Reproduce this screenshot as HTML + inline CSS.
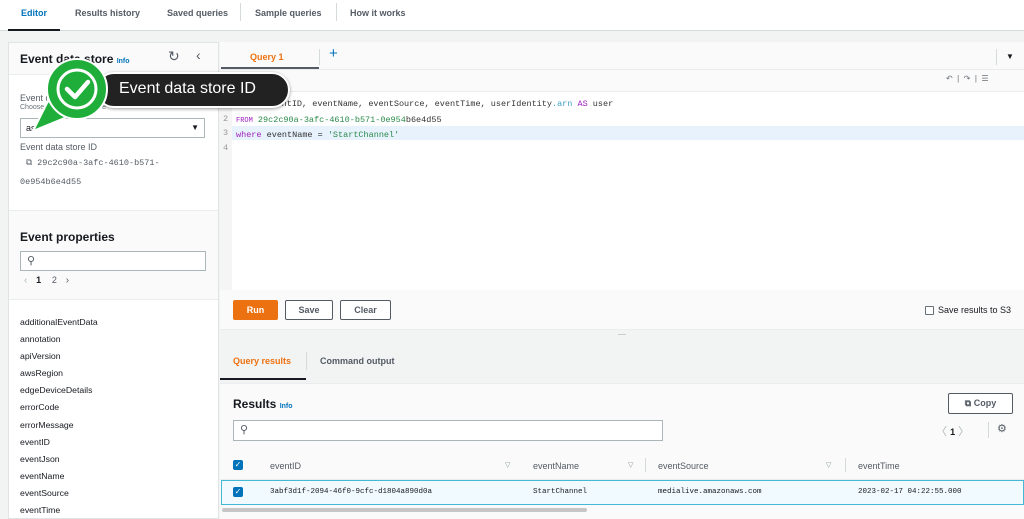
<!DOCTYPE html>
<html><head><meta charset="utf-8"><style>
*{box-sizing:border-box;margin:0;padding:0}
body{width:1024px;height:519px;overflow:hidden;background:#f2f3f3;font-family:"Liberation Sans",sans-serif;color:#16191f;position:relative;font-size:10px}
.a{position:absolute}
.mono{font-family:"Liberation Mono",monospace}
.btn{position:absolute;border:1px solid #545b64;background:#fff;font-weight:bold;font-size:9px;color:#545b64;text-align:center;line-height:18px;border-radius:2px}
</style></head><body>
<!-- top nav -->
<div class="a" style="left:0;top:0;width:1024px;height:31px;background:#fff;border-bottom:1px solid #d5dbdb"></div>
<div class="a" style="left:21px;top:8px;font-size:9px;font-weight:bold;color:#0073bb">Editor</div>
<div class="a" style="left:8px;top:29px;width:52px;height:2px;background:#16191f"></div>
<div class="a" style="left:75px;top:8px;font-size:9px;font-weight:bold;color:#545b64">Results history</div>
<div class="a" style="left:167px;top:8px;font-size:9px;font-weight:bold;color:#545b64">Saved queries</div>
<div class="a" style="left:240px;top:3px;width:1px;height:18px;background:#d5dbdb"></div>
<div class="a" style="left:255px;top:8px;font-size:9px;font-weight:bold;color:#545b64">Sample queries</div>
<div class="a" style="left:336px;top:3px;width:1px;height:18px;background:#d5dbdb"></div>
<div class="a" style="left:350px;top:8px;font-size:9px;font-weight:bold;color:#545b64">How it works</div>

<!-- left panel -->
<div class="a" style="left:8px;top:42px;width:211px;height:477px;background:#fff;border:1px solid #e1e4e4"></div>
<div class="a" style="left:9px;top:43px;width:209px;height:32px;background:#fafafa;border-bottom:1px solid #eaeded"></div>
<div class="a" style="left:20px;top:52px;font-size:12px;font-weight:bold">Event data store <span style="font-size:7px;color:#0073bb">Info</span></div>
<div class="a" style="left:168px;top:48px;font-size:14px;color:#545b64">↻</div>
<div class="a" style="left:196px;top:47px;font-size:14px;color:#545b64">‹</div>
<div class="a" style="left:20px;top:93px;font-size:9px;color:#545b64">Event data store</div>
<div class="a" style="left:20px;top:104px;font-size:7px;color:#687078">Choose an event data store</div>
<div class="a" style="left:20px;top:118px;width:185px;height:20px;border:1px solid #aab7b8;background:#fff;font-size:9px;padding:4px 5px">as<span style="float:right;font-size:8px">▼</span></div>
<div class="a" style="left:20px;top:142px;font-size:9px;color:#545b64">Event data store ID</div>
<div class="a mono" style="left:26px;top:158px;font-size:8.5px;color:#545b64">⧉ 29c2c90a-3afc-4610-b571-</div>
<div class="a mono" style="left:20px;top:177px;font-size:8.5px;color:#545b64">0e954b6e4d55</div>
<div class="a" style="left:9px;top:210px;width:209px;height:90px;background:#fafafa;border-top:1px solid #eaeded;border-bottom:1px solid #eaeded"></div>
<div class="a" style="left:20px;top:230px;font-size:12px;font-weight:bold">Event properties</div>
<div class="a" style="left:20px;top:251px;width:186px;height:20px;border:1px solid #aab7b8;background:#fff;font-size:11px;color:#545b64;padding:2px 6px">⚲</div>
<div class="a" style="left:24px;top:275px;font-size:10px;color:#aab7b8">‹ <b style="color:#16191f;margin-left:6px;font-size:9px">1</b> <span style="color:#545b64;margin-left:8px;font-size:9px">2</span> <span style="color:#545b64;margin-left:6px">›</span></div>
<div class="a" style="left:20px;top:314px;font-size:8.7px;line-height:17.1px;color:#16191f">additionalEventData<br>annotation<br>apiVersion<br>awsRegion<br>edgeDeviceDetails<br>errorCode<br>errorMessage<br>eventID<br>eventJson<br>eventName<br>eventSource<br>eventTime</div>

<!-- right top -->
<div class="a" style="left:220px;top:42px;width:804px;height:28px;background:#fafafa;border-bottom:1px solid #eaeded"></div>
<div class="a" style="left:250px;top:52px;font-size:9px;font-weight:bold;color:#ec7211">Query 1</div>
<div class="a" style="left:221px;top:67px;width:98px;height:2px;background:#545b64"></div>
<div class="a" style="left:319px;top:49px;width:1px;height:16px;background:#d5dbdb"></div>
<div class="a" style="left:329px;top:45px;font-size:15px;color:#0073bb">+</div>
<div class="a" style="left:996px;top:49px;width:1px;height:16px;background:#d5dbdb"></div>
<div class="a" style="left:1006px;top:52px;font-size:8px">▼</div>
<div class="a" style="left:220px;top:70px;width:804px;height:22px;background:#fafafa;border-bottom:1px solid #eaeded"></div>
<div class="a" style="left:946px;top:74px;font-size:8px;color:#687078">↶ &nbsp;|&nbsp; ↷ &nbsp;|&nbsp; ☰</div>
<!-- editor -->
<div class="a" style="left:220px;top:92px;width:804px;height:198px;background:#fff"></div>
<div class="a" style="left:220px;top:92px;width:12px;height:198px;background:#f5f5f5"></div>
<div class="a" style="left:232px;top:126px;width:792px;height:14px;background:#e8f2fc"></div>
<div class="a mono" style="left:223px;top:97px;font-size:8.5px;line-height:14.5px;color:#999">1<br>2<br>3<br>4</div>
<div class="a mono" style="left:236px;top:97px;font-size:8.5px;line-height:14.5px;color:#333;white-space:pre"><span style="color:#a020c0;font-size:7px">SELECT</span> eventID, eventName, eventSource, eventTime, userIdentity<span style="color:#3aa0c8">.arn</span> <span style="color:#a020c0">AS</span> user
<span style="color:#a020c0;font-size:7px">FROM</span> <span style="color:#2a8a4a">29c2c90a-3afc-4610-b571-0e954</span>b6e4d55
<span style="color:#a020c0">where</span> eventName = <span style="color:#2a8a4a">'StartChannel'</span></div>
<!-- buttons row -->
<div class="a" style="left:220px;top:290px;width:804px;height:40px;background:#fafafa;border-bottom:1px solid #eaeded"></div>
<div class="a" style="left:233px;top:300px;width:45px;height:20px;background:#ec7211;border-radius:2px;color:#fff;font-weight:bold;font-size:9px;text-align:center;line-height:20px">Run</div>
<div class="btn" style="left:285px;top:300px;width:48px;height:20px">Save</div>
<div class="btn" style="left:340px;top:300px;width:51px;height:20px">Clear</div>
<div class="a" style="left:925px;top:306px;width:9px;height:9px;border:1px solid #687078;border-radius:1px;background:#fff"></div>
<div class="a" style="left:938px;top:305px;font-size:9px;color:#16191f">Save results to S3</div>
<div class="a" style="left:618px;top:334px;width:8px;height:1px;background:#ccc"></div>
<div class="a" style="left:233px;top:356px;font-size:9px;font-weight:bold;color:#ec7211">Query results</div>
<div class="a" style="left:306px;top:352px;width:1px;height:18px;background:#d5dbdb"></div>
<div class="a" style="left:320px;top:356px;font-size:9px;font-weight:bold;color:#545b64">Command output</div>
<div class="a" style="left:220px;top:378px;width:86px;height:2px;background:#16191f"></div>
<!-- results -->
<div class="a" style="left:220px;top:383px;width:804px;height:136px;background:#fafafa;border-top:1px solid #eaeded"></div>
<div class="a" style="left:233px;top:397px;font-size:12px;font-weight:bold">Results <span style="font-size:7px;color:#0073bb">Info</span></div>
<div class="a" style="left:948px;top:393px;width:65px;height:21px;border:1px solid #545b64;border-radius:2px;background:#fff;font-size:9px;font-weight:bold;color:#545b64;text-align:center;line-height:19px">⧉ Copy</div>
<div class="a" style="left:233px;top:420px;width:430px;height:21px;border:1px solid #aab7b8;background:#fff;font-size:11px;color:#545b64;padding:2px 6px">⚲</div>
<div class="a" style="left:936px;top:423px;font-size:11px;color:#aab7b8">〈 <b style="color:#16191f;font-size:9px">1</b> 〉</div>
<div class="a" style="left:988px;top:422px;width:1px;height:16px;background:#d5dbdb"></div>
<div class="a" style="left:997px;top:422px;font-size:11px;color:#545b64">⚙</div>
<div class="a" style="left:220px;top:452px;width:804px;height:28px;background:#fafafa;border-bottom:1px solid #eaeded"></div>
<div class="a" style="left:233px;top:460px;width:10px;height:10px;background:#0073bb;border-radius:2px;color:#fff;font-size:8px;line-height:10px;text-align:center">✓</div>
<div class="a" style="left:270px;top:461px;font-size:9px;color:#545b64">eventID</div>
<div class="a" style="left:505px;top:461px;font-size:7px;color:#879596">▽</div>
<div class="a" style="left:533px;top:461px;font-size:9px;color:#545b64">eventName</div>
<div class="a" style="left:628px;top:461px;font-size:7px;color:#879596">▽</div>
<div class="a" style="left:645px;top:458px;width:1px;height:14px;background:#d5dbdb"></div>
<div class="a" style="left:658px;top:461px;font-size:9px;color:#545b64">eventSource</div>
<div class="a" style="left:826px;top:461px;font-size:7px;color:#879596">▽</div>
<div class="a" style="left:845px;top:458px;width:1px;height:14px;background:#d5dbdb"></div>
<div class="a" style="left:858px;top:461px;font-size:9px;color:#545b64">eventTime</div>
<div class="a" style="left:221px;top:480px;width:803px;height:25px;background:#f1faff;border:1px solid #44b9d6"></div>
<div class="a" style="left:233px;top:487px;width:10px;height:10px;background:#0073bb;border-radius:2px;color:#fff;font-size:8px;line-height:10px;text-align:center">✓</div>
<div class="a mono" style="left:270px;top:488px;font-size:7.5px;color:#16191f">3abf3d1f-2094-46f0-9cfc-d1804a890d0a</div>
<div class="a mono" style="left:533px;top:488px;font-size:7.5px">StartChannel</div>
<div class="a mono" style="left:658px;top:488px;font-size:7.5px">medialive.amazonaws.com</div>
<div class="a mono" style="left:858px;top:488px;font-size:7.5px">2023-02-17 04:22:55.000</div>
<div class="a" style="left:222px;top:508px;width:365px;height:4px;background:#c6c6c6;border-radius:2px"></div>

<!-- tooltip overlay -->
<div class="a" style="left:96px;top:72px;width:194px;height:36px;background:#222;border-radius:18px;border:2px solid #fff;box-shadow:0 1px 3px rgba(0,0,0,.4)"></div>
<div class="a" style="left:119px;top:80px;font-size:16px;color:#fff">Event data store ID</div>
<svg class="a" style="left:20px;top:55px" width="90" height="80" viewBox="0 0 90 80">
<path d="M13 76 L28 46 L52 60 Z" fill="#1fae3a" stroke="#fff" stroke-width="2" stroke-linejoin="round"/>
<circle cx="57" cy="34" r="30" fill="#1fae3a" stroke="#fff" stroke-width="2"/>
<circle cx="57" cy="34" r="19" fill="none" stroke="#fff" stroke-width="3"/>
<path d="M47 34 L55 42 L68 27" fill="none" stroke="#fff" stroke-width="4.5" stroke-linecap="round" stroke-linejoin="round"/>
</svg>
</body></html>
